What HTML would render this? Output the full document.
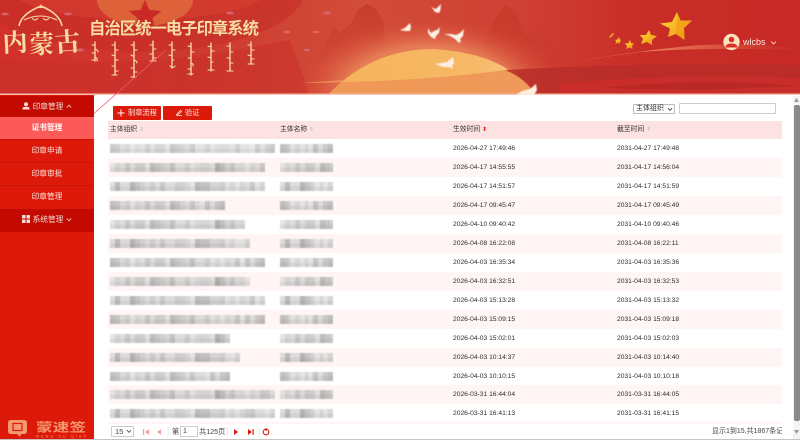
<!DOCTYPE html>
<html lang="zh"><head><meta charset="utf-8"><title>印章系统</title>
<style>
*{box-sizing:border-box}
html,body{margin:0;padding:0;width:800px;height:440px;overflow:hidden;background:#fff;font-family:"Liberation Sans","Noto Sans CJK SC",sans-serif;color:#333}
.a{position:absolute}
#hd{left:0;top:0;width:800px;height:95px;display:block}
#side{left:0;top:95px;width:94px;height:344px;background:#dd1a0a;color:#fff;font-size:7.7px;text-align:center}
.m{position:absolute;left:0;width:94px;line-height:22px;white-space:nowrap}
.d{background:#c20a00;color:#f6dcd8}
.i{border-top:1px solid #c91509;color:#fbe3df}
.on{background:#fb5a58;font-weight:bold;color:#fff}
.btn{top:106px;height:14px;background:#dc1a0a;border-radius:1px;color:#fde5e0;font-size:7.2px;line-height:14px;white-space:nowrap}
.r{left:108px;width:674px;height:19px;position:absolute}
.p{background:#fff5f5}
.t{position:absolute;font-size:6.7px;line-height:19px;color:#2c2c2c;white-space:nowrap}
.b{position:absolute;top:5px;height:9px;opacity:.72;filter:blur(.55px);
background-image:linear-gradient(#f6f6f6 0 50%,#e4e4e4 50%),
repeating-linear-gradient(90deg,#fff 0 25px,#e4e4e4 25px 30px,#fff 30px 40px,#d0d0d0 40px 50px,#f2f2f2 50px 65px),
repeating-linear-gradient(90deg,#e4e4e4 0 5px,#cfcfcf 5px 10px,#dadada 10px 15px,#bdbdbd 15px 20px,#d8d8d8 20px 30px,#c4c4c4 30px 35px,#e0e0e0 35px 40px,#d2d2d2 40px 45px);
background-blend-mode:multiply}
.r:nth-child(3n) .b{background-position:0 0,-20px 0,-10px 0}
.r:nth-child(3n+1) .b{background-position:0 0,-45px 0,-25px 0}
.h{position:absolute;font-size:6.8px;line-height:18px;color:#333;white-space:nowrap}
.s{color:#ccc;font-size:6px}
.pg{position:absolute;top:426px;font-size:7.200px;line-height:12px;color:#444;white-space:nowrap}
.b.c2{left:172px;width:53px}
</style></head><body>
<svg id="hd" class="a" viewBox="0 0 800 95" xmlns="http://www.w3.org/2000/svg">
<defs>
<linearGradient id="bg" x1="0" x2="1" y1="0" y2="0"><stop offset="0" stop-color="#d2302a"/><stop offset=".25" stop-color="#cd3a30"/><stop offset=".45" stop-color="#d24d38"/><stop offset=".65" stop-color="#cf4034"/><stop offset=".8" stop-color="#c92d27"/><stop offset="1" stop-color="#c72a26"/></linearGradient>
<radialGradient id="glow"><stop offset="0" stop-color="#fcd28f" stop-opacity=".95"/><stop offset=".62" stop-color="#f29a66" stop-opacity=".6"/><stop offset="1" stop-color="#d9483a" stop-opacity="0"/></radialGradient>
<linearGradient id="sun" x1="0" x2="1"><stop offset="0" stop-color="#f5b35a"/><stop offset=".7" stop-color="#f6b866"/><stop offset="1" stop-color="#f9c88a"/></linearGradient>
<linearGradient id="st" x1="0" y1="0" x2="1" y2="1"><stop offset="0" stop-color="#ffe13a"/><stop offset="1" stop-color="#f08a10"/></linearGradient>
<linearGradient id="ray" x1="0" x2="1"><stop offset="0" stop-color="#f0a070" stop-opacity="0"/><stop offset=".4" stop-color="#f3a878" stop-opacity=".85"/><stop offset="1" stop-color="#e86a40" stop-opacity="0"/></linearGradient>
<linearGradient id="mt" x1="0" y1="0" x2="0" y2="1"><stop offset="0" stop-color="#c53a28" stop-opacity=".85"/><stop offset="1" stop-color="#c53a28" stop-opacity="0"/></linearGradient>
<filter id="f1"><feGaussianBlur stdDeviation=".35"/></filter>
<filter id="f2"><feGaussianBlur stdDeviation=".5"/></filter>
</defs>
<rect width="800" height="95" fill="url(#bg)"/>
<ellipse cx="140" cy="-10" rx="165" ry="62" fill="#c52c27" opacity=".55"/>
<ellipse cx="140" cy="-12" rx="130" ry="32" fill="#d63d30" opacity=".7"/>
<ellipse cx="145" cy="0" rx="48" ry="26" fill="#e0703f" opacity=".75"/>
<path d="M145 0l4.500 10 12 1-9 7 3 12-10.500-6.500L134.500 30l3-12-9-7 12-1z" fill="#ca2a26"/>
<path d="M0 60Q150 70 290 40L310 95H0z" fill="#c8302a" opacity=".55"/>
<g fill="#d9717c" opacity=".75"><ellipse cx="68" cy="14" rx="4" ry="1.500"/><ellipse cx="327" cy="13" rx="4" ry="1.500"/><ellipse cx="230" cy="13" rx="4" ry="1.500"/><ellipse cx="287" cy="32" rx="3.500" ry="1.500"/><ellipse cx="5" cy="14" rx="4" ry="1.500"/><ellipse cx="80" cy="50" rx="4" ry="1.500"/><ellipse cx="316" cy="32" rx="3.500" ry="1.300"/><ellipse cx="307" cy="50" rx="3" ry="1.300"/></g>
<path d="M318 60L334 26 340 33 352 22 358 10 367 4 376 9 384 22 385 50 340 70z" fill="url(#mt)"/>
<path d="M480 60L490 30 497 15 505 5 513 9 522 25 527 36 537 29 549 37 558 50 558 70 490 70z" fill="url(#mt)"/>
<ellipse cx="430" cy="90" rx="135" ry="72" fill="url(#glow)"/>
<path d="M328 95Q370 50 432 49Q490 52 520 78Q530 87 536 95z" fill="url(#sun)"/>
<path d="M300 83Q420 82 505 70L515 72Q530 85 536 95H329Q334 88 345 80z" fill="#ee9658" opacity=".92"/>
<path d="M505 70Q640 62 800 65V95H536Q525 78 505 70z" fill="#b72d29" opacity=".85"/>
<path d="M560 84Q680 72 800 78V95H560z" fill="#d02e2a" opacity=".7"/>
<path d="M600 88Q700 78 800 86L700 90z" fill="#b02525" opacity=".6"/>
<path d="M520 72Q620 52 700 45Q770 43 800 50Q700 47 640 52Q580 60 520 72z" fill="url(#ray)"/>
<rect y="93.500" width="800" height="1.500" fill="#f5c0b0"/>
<g fill="#fdf0e2" filter="url(#f2)">
<path d="M431 7L436 9 440 5 441 4 440.500 10 439 13 435 12 433 9z"/>
<path d="M400 30L405 28 410 23 411 27 410 31 405 31z"/>
<path d="M428 28L431 33 434 31 437 30 440 27 439 33 436 36 435 39 431 37 428 33z"/>
<path d="M444 34L451 34 456 35 460 33 464 29 463 36 460 39 461 41 459 43 455 39 450 36z"/>
<path d="M435 64L441 63 447 62 452 58 453 57 454 63 452 66 453 69 449 67 443 67z"/>
<path d="M516 95L522 91 530 89 536 84 537 90 534 95z"/>
</g>
<path d="M677 12L680.500 20.500 692 20.500 684 28 684.500 40 676 34 668 37 670 28.500 660 23.500 672 22z" fill="url(#st)"/>
<path d="M677 12L676 34 684.500 40 684 28 692 20.500 680.500 20.500z" fill="#f2a018" opacity=".75"/>
<path d="M649 30L651 35 657 36 652 40 652 45 647 42 641 44 643 39 640 35 646 35z" fill="url(#st)"/>
<path d="M630 40L631 43 634 43.500 632 46 632.500 49 629.500 47.500 626.500 49 627 46 625 43.500 628.500 43z" fill="url(#st)"/>
<path d="M619 37L619.800 39.500 621.500 40 620 41.500 620 44 618 42.500 615.500 44 616.300 41.500 615 40 617.500 39.500z" fill="url(#st)"/>
<path d="M613 33L614 34 610 38 609 37z" fill="#f4b030"/>
<circle cx="731.500" cy="42" r="8.200" fill="#fbe3bf"/>
<circle cx="731.500" cy="39.500" r="2.800" fill="#d9302a"/><path d="M725.500 47.500q0-4 6-4t6 4z" fill="#d9302a"/>
<text x="743" y="45" font-size="9" fill="#fbe8e0" font-family="Liberation Sans">wlcbs</text>
<path d="M771 41.500l2.500 2.500 2.500-2.500" stroke="#fbe8e0" fill="none" stroke-width=".8"/>
<g fill="none" stroke="#f6dba0" stroke-width="1.500">
<path d="M19 26Q21 14 41 6Q60 14 62 26" />
<path d="M24 20Q40 12 57 20" stroke-width="1"/>
<path d="M32 18q3 4 6 0m5 0q3 4 6 0" stroke-width="1"/>
</g>
<path d="M41 4l-2 4h4z" fill="#f6dba0"/>
<g filter="url(#f1)" font-family="Noto Serif CJK SC,serif" fill="#f6dca2" font-weight="700">
<text x="3" y="52" font-size="25" transform="rotate(-3 3 52)">内</text>
<text x="29" y="53" font-size="25">蒙</text>
<text x="55" y="52" font-size="26" transform="rotate(-4 55 52)">古</text>
</g>
<text x="89" y="34" font-size="16.400" font-weight="bold" fill="#f6dca2" font-family="Liberation Sans,Noto Sans CJK SC" textLength="170">自治区统一电子印章系统</text>
<g stroke="#f8e0ad" fill="none" stroke-width="1.300" filter="url(#f1)" stroke-linecap="round">
<path d="M95 42v19M115 42v33M134 42v36M153 41v20M172 42v26M191 43v32M211 43v28M230 43v28M251 42v22"/>
<path d="M92 45h3M95 49q3 1 3 3M92 53h3M95 57q3 1 2 4M92 60h3" stroke-width="1.100"/>
<path d="M112 45h3M115 50h3M112 55q2 1 3 0M115 60h3M112 66h3M115 71h3M112 75h5" stroke-width="1.100"/>
<path d="M131 45h3M134 50h3M131 55q2 2 3 0M134 60q3 1 3 3M131 68h3M134 72h3M131 77h5" stroke-width="1.100"/>
<path d="M150 45h3M153 49h3M150 54h3M153 58h3M150 61h6" stroke-width="1.100"/>
<path d="M169 45h3M172 50h3M169 55q2 1 3 0M172 60h2M170 66q3 3 5 0" stroke-width="1.100"/>
<path d="M188 46q2 1 3 0M191 52h3M188 58h3M191 63q3 1 2 3M188 69h3M188 74h5" stroke-width="1.100"/>
<path d="M208 46q2 1 3 0M211 51h3M208 57q2 1 3 0M211 62h2M208 70h6" stroke-width="1.100"/>
<path d="M227 46h3M230 52h3M227 58h3M230 63h3M227 71h6" stroke-width="1.100"/>
<path d="M248 45h3M251 50h3M248 55q2 1 3 0M251 59h3M248 64h6" stroke-width="1.100"/>
</g>
</svg>
<svg class="a" style="left:88px;top:45px;width:82px;height:75px" viewBox="88 45 82 75"><path d="M90 117L166 50" stroke="#ee5a66" stroke-width=".8" fill="none"/></svg>

<div id="side" class="a">
<div class="m d" style="top:1px;height:21px">
<svg width="8" height="8" viewBox="0 0 8 8" style="vertical-align:-1px"><circle cx="4" cy="2.300" r="2" fill="#f6dcd8"/><path d="M.5 7.500v-2q3.500-1.500 7 0v2z" fill="#f6dcd8"/></svg> 印章管理 <svg width="6" height="5" viewBox="0 0 6 5"><path d="M.8 3.500L3 1.200 5.200 3.500" stroke="#f6dcd8" fill="none" stroke-width=".8"/></svg></div>
<div class="m on" style="top:22px;height:22px">证书管理</div>
<div class="m i" style="top:44px;height:23px">印章申请</div>
<div class="m i" style="top:67px;height:23px">印章审批</div>
<div class="m i" style="top:90px;height:23px">印章管理</div>
<div class="m d" style="top:114px;height:23px">
<svg width="8" height="8" viewBox="0 0 8 8" style="vertical-align:-1px" fill="#f6dcd8"><rect width="3.500" height="3.500"/><rect x="4.500" width="3.500" height="3.500"/><rect y="4.500" width="3.500" height="3.500"/><rect x="4.500" y="4.500" width="3.500" height="3.500"/></svg> 系统管理 <svg width="6" height="5" viewBox="0 0 6 5"><path d="M.8 1.500L3 3.800 5.200 1.500" stroke="#f6dcd8" fill="none" stroke-width=".8"/></svg></div>
<svg class="a" style="left:8px;top:325px" width="82" height="19" viewBox="0 0 82 19">
<path d="M0 3q0-3 3-3h13q3 0 3 3v8q0 3-3 3h-3l-1 3-3-3H3q-3 0-3-3z" fill="#f59a70"/><rect x="5" y="3.500" width="9" height="7" fill="none" stroke="#dd1a0a" stroke-width="1.200"/>
<text x="28" y="11.500" font-size="12" fill="#f59a70" font-family="Liberation Sans,Noto Sans CJK SC" font-weight="bold" textLength="50" lengthAdjust="spacingAndGlyphs">蒙速签</text>
<text x="28" y="17.500" font-size="3.800" fill="#f59a70" font-family="Liberation Sans" textLength="50">MENG SU QIAN</text></svg>
</div>

<div class="a btn" style="left:113px;width:48px"><svg class="a" style="left:4px;top:3px" width="8" height="8" viewBox="0 0 8 8"><path d="M4 .5v7M.5 4h7" stroke="#fff" stroke-width="1"/></svg><span class="a" style="left:15px">制章流程</span></div>
<div class="a btn" style="left:163px;width:49px"><svg class="a" style="left:12px;top:3px" width="8" height="8" viewBox="0 0 8 8"><path d="M1 6L5.500 1.500 6.500 2.500 2 6.500H7" stroke="#fde5e0" fill="none" stroke-width=".8"/></svg><span class="a" style="left:22px">验证</span></div>
<div class="a" style="left:633px;top:104px;width:42px;height:10px;border:1px solid #bbb;border-radius:1px;font-size:7px;line-height:8px;padding-left:2px;color:#333;white-space:nowrap">主体组织<svg class="a" style="left:33px;top:2px" width="6" height="5" viewBox="0 0 6 5"><path d="M1 1.200L3 3.400 5 1.200" stroke="#333" fill="none" stroke-width=".8"/></svg></div>
<div class="a" style="left:679px;top:103px;width:97px;height:11px;border:1px solid #ccc;border-radius:1px"></div>

<div class="a" style="left:108px;top:121px;width:674px;height:18px;background:#fde2e3"></div>
<div class="h" style="left:110px;top:121px">主体组织 <span class="s">⬍</span></div>
<div class="h" style="left:280px;top:121px">主体名称 <span class="s">⬍</span></div>
<div class="h" style="left:453px;top:121px">生效时间 <span class="s" style="color:#e22">⬍</span></div>
<div class="h" style="left:617px;top:121px">截至时间 <span class="s">⬍</span></div>

<div class="r" style="top:139px"><div class="b" style="left:2px;width:165px;opacity:.6"></div><div class="b c2"></div><div class="t" style="left:345px">2026-04-27 17:49:46</div><div class="t" style="left:509px">2031-04-27 17:49:48</div></div>
<div class="r p" style="top:158px"><div class="b" style="left:2px;width:155px"></div><div class="b c2"></div><div class="t" style="left:345px">2026-04-17 14:55:55</div><div class="t" style="left:509px">2031-04-17 14:56:04</div></div>
<div class="r" style="top:177px"><div class="b" style="left:2px;width:155px"></div><div class="b c2"></div><div class="t" style="left:345px">2026-04-17 14:51:57</div><div class="t" style="left:509px">2031-04-17 14:51:59</div></div>
<div class="r p" style="top:196px"><div class="b" style="left:2px;width:115px"></div><div class="b c2"></div><div class="t" style="left:345px">2026-04-17 09:45:47</div><div class="t" style="left:509px">2031-04-17 09:45:49</div></div>
<div class="r" style="top:215px"><div class="b" style="left:2px;width:135px"></div><div class="b c2"></div><div class="t" style="left:345px">2026-04-10 09:40:42</div><div class="t" style="left:509px">2031-04-10 09:40:46</div></div>
<div class="r p" style="top:234px"><div class="b" style="left:2px;width:140px"></div><div class="b c2"></div><div class="t" style="left:345px">2026-04-08 16:22:08</div><div class="t" style="left:509px">2031-04-08 16:22:11</div></div>
<div class="r" style="top:253px"><div class="b" style="left:2px;width:155px"></div><div class="b c2"></div><div class="t" style="left:345px">2026-04-03 16:35:34</div><div class="t" style="left:509px">2031-04-03 16:35:36</div></div>
<div class="r p" style="top:272px"><div class="b" style="left:2px;width:140px"></div><div class="b c2"></div><div class="t" style="left:345px">2026-04-03 16:32:51</div><div class="t" style="left:509px">2031-04-03 16:32:53</div></div>
<div class="r" style="top:291px"><div class="b" style="left:2px;width:155px"></div><div class="b c2"></div><div class="t" style="left:345px">2026-04-03 15:13:28</div><div class="t" style="left:509px">2031-04-03 15:13:32</div></div>
<div class="r p" style="top:310px"><div class="b" style="left:2px;width:155px"></div><div class="b c2"></div><div class="t" style="left:345px">2026-04-03 15:09:15</div><div class="t" style="left:509px">2031-04-03 15:09:18</div></div>
<div class="r" style="top:329px"><div class="b" style="left:2px;width:120px"></div><div class="b c2"></div><div class="t" style="left:345px">2026-04-03 15:02:01</div><div class="t" style="left:509px">2031-04-03 15:02:03</div></div>
<div class="r p" style="top:348px"><div class="b" style="left:2px;width:130px"></div><div class="b c2"></div><div class="t" style="left:345px">2026-04-03 10:14:37</div><div class="t" style="left:509px">2031-04-03 10:14:40</div></div>
<div class="r" style="top:367px"><div class="b" style="left:2px;width:120px"></div><div class="b c2"></div><div class="t" style="left:345px">2026-04-03 10:10:15</div><div class="t" style="left:509px">2031-04-03 10:10:18</div></div>
<div class="r p" style="top:385px"><div class="b" style="left:2px;width:165px"></div><div class="b c2"></div><div class="t" style="left:345px">2026-03-31 16:44:04</div><div class="t" style="left:509px">2031-03-31 16:44:05</div></div>
<div class="r" style="top:404px"><div class="b" style="left:2px;width:165px"></div><div class="b c2"></div><div class="t" style="left:345px">2026-03-31 16:41:13</div><div class="t" style="left:509px">2031-03-31 16:41:15</div></div>
<div class="a" style="left:108px;top:422px;width:674px;height:2px;background:#fff5f5"></div>

<div class="a" style="left:111px;top:426px;width:23px;height:11px;border:1px solid #ccc;border-radius:1px;font-size:7.500px;line-height:9px;padding-left:3px;color:#444">15<svg class="a" style="left:14px;top:2px" width="6" height="5" viewBox="0 0 6 5"><path d="M1 1.200L3 3.400 5 1.200" stroke="#444" fill="none" stroke-width=".8"/></svg></div>
<svg class="a" style="left:140px;top:426px" width="135" height="12" viewBox="0 0 135 12">
<g fill="#f4a0a0"><rect x="3" y="3" width="1.200" height="6"/><path d="M9 3v6L5 6z"/><path d="M21 3v6l-4-3z"/></g>
<g stroke="#ddd" stroke-width=".6"><path d="M28 1v10M87 1v10M119 1v10"/></g>
<g fill="#dd1a0a"><path d="M94 3v6l4-3z"/><path d="M108 3v6l4-3z"/><rect x="112.500" y="3" width="1.200" height="6"/></g>
<circle cx="126" cy="6" r="2.800" fill="none" stroke="#dd1a0a" stroke-width="1.100"/><path d="M126 2v3" stroke="#dd1a0a" stroke-width="1"/>
</svg>
<div class="pg" style="left:172px">第</div>
<div class="a" style="left:180px;top:426px;width:18px;height:11px;border:1px solid #ccc;font-size:7px;line-height:9px;padding-left:2px;color:#444">1</div>
<div class="pg" style="left:199px">共125页</div>
<div class="pg" style="left:712px;width:70px;overflow:hidden;font-size:7px">显示1到15,共1867条记录</div>

<div class="a" style="left:793px;top:96px;width:7px;height:343px;background:#f4f4f4"></div>
<div class="a" style="left:794px;top:105px;width:6px;height:316px;background:#8a8a8a;border-radius:2px"></div>
<svg class="a" style="left:793px;top:97px" width="7" height="6" viewBox="0 0 7 6"><path d="M3.500 1L6 5H1z" fill="#999"/></svg>
<svg class="a" style="left:793px;top:429px" width="7" height="6" viewBox="0 0 7 6"><path d="M3.500 5L6 1H1z" fill="#999"/></svg>
<div class="a" style="left:0;top:439px;width:800px;height:1px;background:#c4c4c4"></div>
</body></html>
